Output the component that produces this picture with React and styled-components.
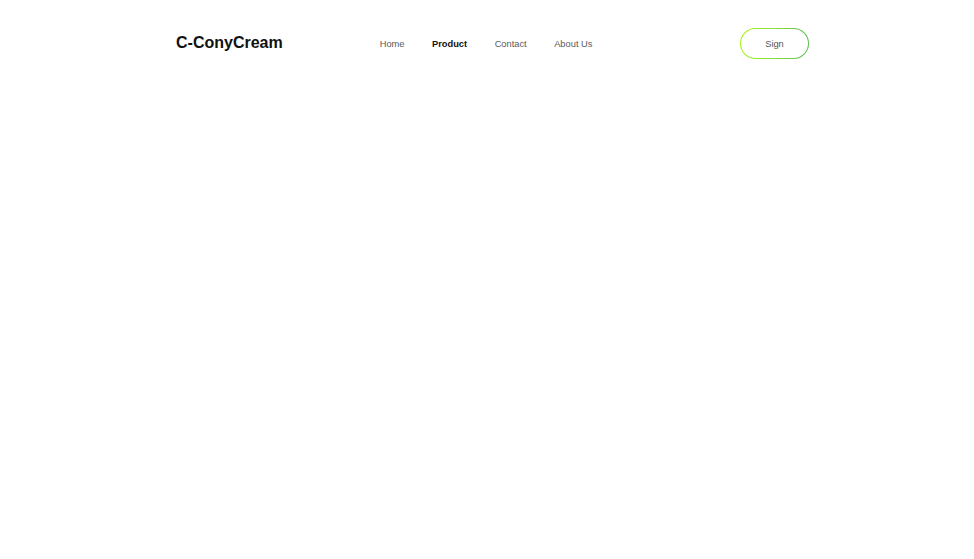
import React from "react";
import styled, { createGlobalStyle } from "styled-components";

const Global = createGlobalStyle`
  html, body { margin: 0; padding: 0; background: #ffffff; }
  body { font-family: "Liberation Sans", Arial, sans-serif; }
  #root { min-height: 559px; }
`;

const Header = styled.header`
  display: flex;
  align-items: center;
  height: 31px;
  padding: 28px 165px 0 176px;
`;

const Logo = styled.div`
  font-size: 16px;
  font-weight: 700;
  color: #111;
  line-height: 1;
  margin-top: -2px;
`;

const Nav = styled.nav`
  display: flex;
  align-items: center;
  gap: 27.5px;
  margin-left: 97px;
  padding-top: 2px;
`;

const NavLink = styled.a`
  font-size: 9.3px;
  line-height: 1;
  color: ${(p) => (p.$active ? "#111" : "#5a5a5a")};
  font-weight: ${(p) => (p.$active ? 700 : 400)};
  text-decoration: none;
  cursor: pointer;
`;

const SignButton = styled.button`
  margin-left: auto;
  width: 69px;
  height: 31px;
  border-radius: 16px;
  border: 1.5px solid transparent;
  background:
    linear-gradient(#fff, #fff) padding-box,
    linear-gradient(90deg, #a3f21c 0%, #8ade3a 50%, #58bd4e 100%) border-box;
  font-family: "Liberation Sans", Arial, sans-serif;
  font-size: 9.3px;
  color: #555;
  padding: 1px 0 0;
  cursor: pointer;
`;

export default function App() {
  return (
    <>
      <Global />
      <Header>
        <Logo>C-ConyCream</Logo>
        <Nav>
          <NavLink>Home</NavLink>
          <NavLink $active>Product</NavLink>
          <NavLink>Contact</NavLink>
          <NavLink>About Us</NavLink>
        </Nav>
        <SignButton>Sign</SignButton>
      </Header>
    </>
  );
}
